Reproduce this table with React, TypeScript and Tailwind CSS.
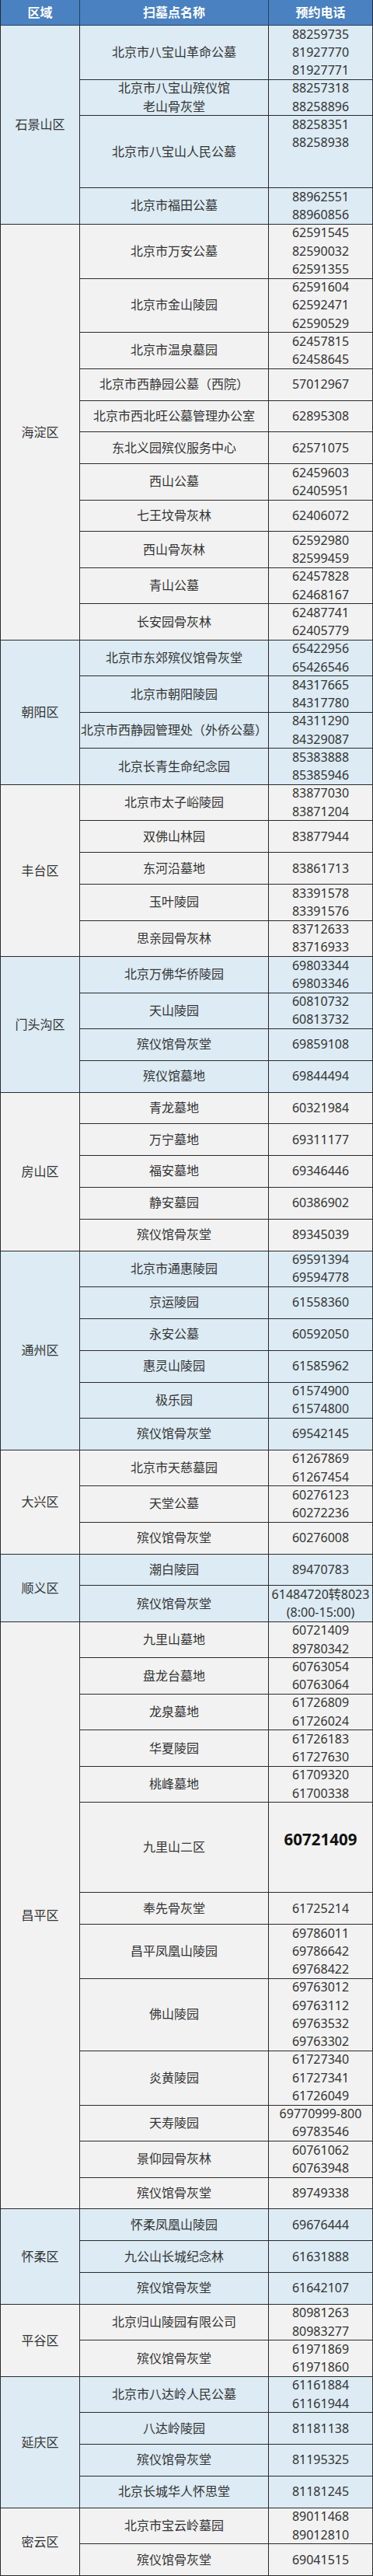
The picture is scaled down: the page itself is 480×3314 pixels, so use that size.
import React from "react";

type Row = { name: string[]; phones: string[]; lines: number; top?: boolean; big?: boolean };
type Region = { region: string; blue: boolean; rows: Row[] };

const r = (name: string | string[], phones: string[], extra?: Partial<Row>): Row => {
  const n = Array.isArray(name) ? name : [name];
  return { name: n, phones, lines: Math.max(n.length, phones.length), ...extra };
};

const data: Region[] = [
  {
    region: "石景山区",
    blue: true,
    rows: [
      r("北京市八宝山革命公墓", ["88259735", "81927770", "81927771"]),
      r(["北京市八宝山殡仪馆", "老山骨灰堂"], ["88257318", "88258896"]),
      r("北京市八宝山人民公墓", ["88258351", "88258938", "\u00a0", "\u00a0"]),
      r("北京市福田公墓", ["88962551", "88960856"]),
    ],
  },
  {
    region: "海淀区",
    blue: false,
    rows: [
      r("北京市万安公墓", ["62591545", "82590032", "62591355"]),
      r("北京市金山陵园", ["62591604", "62592471", "62590529"]),
      r("北京市温泉墓园", ["62457815", "62458645"]),
      r("北京市西静园公墓（西院）", ["57012967"]),
      r("北京市西北旺公墓管理办公室", ["62895308"]),
      r("东北义园殡仪服务中心", ["62571075"]),
      r("西山公墓", ["62459603", "62405951"]),
      r("七王坟骨灰林", ["62406072"]),
      r("西山骨灰林", ["62592980", "82599459"]),
      r("青山公墓", ["62457828", "62468167"]),
      r("长安园骨灰林", ["62487741", "62405779"]),
    ],
  },
  {
    region: "朝阳区",
    blue: true,
    rows: [
      r("北京市东郊殡仪馆骨灰堂", ["65422956", "65426546"]),
      r("北京市朝阳陵园", ["84317665", "84317780"]),
      r("北京市西静园管理处（外侨公墓）", ["84311290", "84329087"]),
      r("北京长青生命纪念园", ["85383888", "85385946"]),
    ],
  },
  {
    region: "丰台区",
    blue: false,
    rows: [
      r("北京市太子峪陵园", ["83877030", "83871204"]),
      r("双佛山林园", ["83877944"]),
      r("东河沿墓地", ["83861713"]),
      r("玉叶陵园", ["83391578", "83391576"]),
      r("思亲园骨灰林", ["83712633", "83716933"]),
    ],
  },
  {
    region: "门头沟区",
    blue: true,
    rows: [
      r("北京万佛华侨陵园", ["69803344", "69803346"]),
      r("天山陵园", ["60810732", "60813732"]),
      r("殡仪馆骨灰堂", ["69859108"]),
      r("殡仪馆墓地", ["69844494"]),
    ],
  },
  {
    region: "房山区",
    blue: false,
    rows: [
      r("青龙墓地", ["60321984"]),
      r("万宁墓地", ["69311177"]),
      r("福安墓地", ["69346446"]),
      r("静安墓园", ["60386902"]),
      r("殡仪馆骨灰堂", ["89345039"]),
    ],
  },
  {
    region: "通州区",
    blue: true,
    rows: [
      r("北京市通惠陵园", ["69591394", "69594778"]),
      r("京运陵园", ["61558360"]),
      r("永安公墓", ["60592050"]),
      r("惠灵山陵园", ["61585962"]),
      r("极乐园", ["61574900", "61574800"]),
      r("殡仪馆骨灰堂", ["69542145"]),
    ],
  },
  {
    region: "大兴区",
    blue: false,
    rows: [
      r("北京市天慈墓园", ["61267869", "61267454"]),
      r("天堂公墓", ["60276123", "60272236"]),
      r("殡仪馆骨灰堂", ["60276008"]),
    ],
  },
  {
    region: "顺义区",
    blue: true,
    rows: [
      r("潮白陵园", ["89470783"]),
      r("殡仪馆骨灰堂", ["61484720转8023", "(8:00-15:00)"]),
    ],
  },
  {
    region: "昌平区",
    blue: false,
    rows: [
      r("九里山墓地", ["60721409", "89780342"]),
      r("盘龙台墓地", ["60763054", "60763064"]),
      r("龙泉墓地", ["61726809", "61726024"]),
      r("华夏陵园", ["61726183", "61727630"]),
      r("桃峰墓地", ["61709320", "61700338"]),
      r("九里山二区", ["60721409"], { lines: 5, big: true }),
      r("奉先骨灰堂", ["61725214"]),
      r("昌平凤凰山陵园", ["69786011", "69786642", "69768422"]),
      r("佛山陵园", ["69763012", "69763112", "69763532", "69763302"]),
      r("炎黄陵园", ["61727340", "61727341", "61726049"]),
      r("天寿陵园", ["69770999-800", "69783546"]),
      r("景仰园骨灰林", ["60761062", "60763948"]),
      r("殡仪馆骨灰堂", ["89749338"]),
    ],
  },
  {
    region: "怀柔区",
    blue: true,
    rows: [
      r("怀柔凤凰山陵园", ["69676444"]),
      r("九公山长城纪念林", ["61631888"]),
      r("殡仪馆骨灰堂", ["61642107"]),
    ],
  },
  {
    region: "平谷区",
    blue: false,
    rows: [
      r("北京归山陵园有限公司", ["80981263", "80983277"]),
      r("殡仪馆骨灰堂", ["61971869", "61971860"]),
    ],
  },
  {
    region: "延庆区",
    blue: true,
    rows: [
      r("北京市八达岭人民公墓", ["61161884", "61161944"]),
      r("八达岭陵园", ["81181138"]),
      r("殡仪馆骨灰堂", ["81195325"]),
      r("北京长城华人怀思堂", ["81181245"]),
    ],
  },
  {
    region: "密云区",
    blue: false,
    rows: [
      r("北京市宝云岭墓园", ["89011468", "89012810"]),
      r("殡仪馆骨灰堂", ["69041515"]),
    ],
  },
];

const heights: Record<number, string> = {
  1: "h-[40.8px]",
  2: "h-[46.5px]",
  3: "h-[69.75px]",
  4: "h-[93px]",
  5: "h-[116px]",
};

function TableRow({ row }: { row: Row }) {
  return (
    <div className={`flex border-b border-[#2a2a2a] ${heights[row.lines]}`}>
      <div className="w-[243px] shrink-0 border-r border-[#2a2a2a] flex flex-col items-center justify-center leading-[23.25px] text-center">
        {row.name.map((n, i) => (
          <div key={i}>{n}</div>
        ))}
      </div>
      <div className="flex-1 flex flex-col items-center justify-center leading-[23.25px] text-center">
        {row.big ? (
          <div className="pb-[20px] text-[20.5px] font-bold text-[#111]">{row.phones[0]}</div>
        ) : (
          row.phones.map((p, i) => <div key={i}>{p}</div>)
        )}
      </div>
    </div>
  );
}

export default function App() {
  return (
    <div className="w-[480px] bg-white [font-family:'Noto_Sans','Noto_Sans_CJK_SC',sans-serif] text-[16px] text-[#333333]">
      <div className="border-l border-r border-[#2a2a2a]">
        <div className="flex h-[33px] bg-[#4a81c0] border-b border-[#2a3f5c] text-white font-bold text-[16px]">
          <div className="w-[102px] shrink-0 border-r border-[#2a3f5c] flex items-center justify-center">区域</div>
          <div className="w-[243px] shrink-0 border-r border-[#2a3f5c] flex items-center justify-center">扫墓点名称</div>
          <div className="flex-1 flex items-center justify-center">预约电话</div>
        </div>
        {data.map((g) => (
          <div key={g.region} className={`flex ${g.blue ? "bg-[#dcebf4]" : "bg-[#f2f2f2]"}`}>
            <div className="w-[102px] shrink-0 border-r border-b border-[#2a2a2a] flex items-center justify-center">
              {g.region}
            </div>
            <div className="flex-1 flex flex-col">
              {g.rows.map((row, i) => (
                <TableRow key={i} row={row} />
              ))}
            </div>
          </div>
        ))}
      </div>
    </div>
  );
}
